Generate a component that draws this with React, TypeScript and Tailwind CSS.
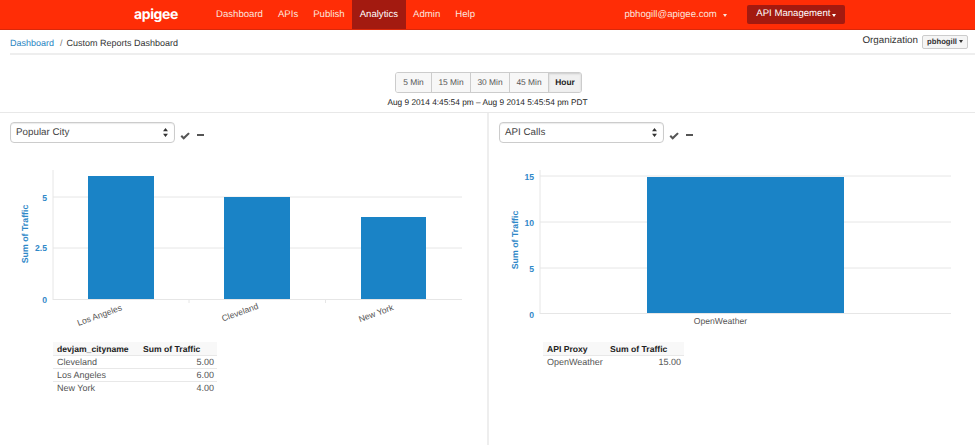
import React from 'react';

const NAV_ITEMS = ['Dashboard', 'APIs', 'Publish', 'Analytics', 'Admin', 'Help'];
const RANGES = ['5 Min', '15 Min', '30 Min', '45 Min', 'Hour'];
const AXIS = '#e6e6e6';
const BLUE = '#1a83c6';
const LABEL = '#2f88c8';

const CaretsIcon = () => (
  <svg width="5" height="9" viewBox="0 0 6 11" className="absolute right-[6px] top-[5px]">
    <path d="M3 0 L6 4 L0 4 Z M0 7 L6 7 L3 11 Z" fill="#333" />
  </svg>
);

const ReportHeader: React.FC<{ label: string }> = ({ label }) => (
  <div className="flex items-center">
    <div className="relative h-[21px] w-[165px] rounded-[4px] border border-[#ccc] bg-white pl-[5px] text-[9.8px] leading-[19px] text-[#444] shadow-[inset_0_1px_1px_rgba(0,0,0,0.08)]">
      {label}
      <CaretsIcon />
    </div>
    <svg width="10" height="8" viewBox="0 0 10 8" className="ml-[5px] mt-[6px]">
      <path d="M0.5 4.5 L2 3 L3.7 4.8 L8.3 0.5 L9.8 1.8 L3.7 7.8 Z" fill="#555" />
    </svg>
    <div className="ml-[7px] mt-[4px] h-[2px] w-[7px] bg-[#555]" />
  </div>
);

const Table: React.FC<{ head: string; rows: [string, string][]; width: string; nameWidth: string }> = ({
  head,
  rows,
  width,
  nameWidth,
}) => (
  <table className={`${width} table-fixed border-collapse text-[9px] leading-[12px] text-[#555]`}>
    <thead>
      <tr className="bg-[#f8f8f8] font-bold text-[#222]">
        <th className={`${nameWidth} h-[13.5px] py-0 pl-[4px] text-left text-[8.6px]`}>{head}</th>
        <th className="h-[13.5px] py-0 pr-[3px] text-left text-[8.6px]">Sum of Traffic</th>
      </tr>
    </thead>
    <tbody>
      {rows.map(([name, value]) => (
        <tr key={name} className="border-t border-[#e8e8e8]">
          <td className="h-[13px] py-0 pl-[4px]">{name}</td>
          <td className="h-[13px] py-0 pr-[3px] text-right">{value}</td>
        </tr>
      ))}
    </tbody>
  </table>
);

const chartFont = { fontFamily: '"Liberation Sans", Arial, sans-serif' };

const CityChart = () => (
  <svg width="486" height="178" viewBox="0 0 486 178" style={chartFont} className="block">
    {[27, 78].map((y) => (
      <line key={y} x1="53" x2="462" y1={y} y2={y} stroke={AXIS} />
    ))}
    <line x1="53" x2="53" y1="0" y2="130" stroke={AXIS} />
    <line x1="53" x2="462" y1="129.5" y2="129.5" stroke={AXIS} />
    <line x1="189" x2="189" y1="129" y2="133" stroke={AXIS} />
    <line x1="325.5" x2="325.5" y1="129" y2="133" stroke={AXIS} />
    <rect x="88" y="6" width="66" height="123" fill={BLUE} />
    <rect x="224" y="27" width="66" height="102" fill={BLUE} />
    <rect x="361" y="47" width="65" height="82" fill={BLUE} />
    <g fontSize="8.6" fontWeight="700" fill={LABEL} textAnchor="end">
      <text x="47" y="31">5</text>
      <text x="47" y="81">2.5</text>
      <text x="47" y="133">0</text>
    </g>
    <text transform="translate(28 64) rotate(-90)" fontSize="8.8" fontWeight="700" fill={LABEL} textAnchor="middle">
      Sum of Traffic
    </text>
    <g fontSize="8.6" fill="#555" textAnchor="middle">
      <text transform="translate(100.5 148) rotate(-20)">Los Angeles</text>
      <text transform="translate(241 145) rotate(-20)">Cleveland</text>
      <text transform="translate(377 146) rotate(-20)">New York</text>
    </g>
  </svg>
);

const ApiChart = () => (
  <svg width="486" height="178" viewBox="0 0 486 178" style={chartFont} className="block">
    {[6, 52, 98].map((y) => (
      <line key={y} x1="51" x2="462" y1={y} y2={y} stroke={AXIS} />
    ))}
    <line x1="51" x2="51" y1="0" y2="144" stroke={AXIS} />
    <line x1="51" x2="462" y1="143.5" y2="143.5" stroke={AXIS} />
    <rect x="158" y="7" width="197" height="136" fill={BLUE} />
    <g fontSize="8.6" fontWeight="700" fill={LABEL} textAnchor="end">
      <text x="45" y="10">15</text>
      <text x="45" y="56">10</text>
      <text x="45" y="102">5</text>
      <text x="45" y="148">0</text>
    </g>
    <text transform="translate(28.5 70) rotate(-90)" fontSize="8.8" fontWeight="700" fill={LABEL} textAnchor="middle">
      Sum of Traffic
    </text>
    <text x="231.5" y="154" fontSize="8.6" fill="#555" textAnchor="middle">
      OpenWeather
    </text>
  </svg>
);

const App: React.FC = () => {
  return (
    <div className="h-[446px] w-[975px] overflow-hidden bg-white font-['Liberation_Sans',Arial,sans-serif] text-[#333] [text-rendering:geometricPrecision]">
      <nav className="flex h-[30px] items-stretch border-b border-[#d9280b] bg-[#ff2d06] text-[9.6px] text-[#fbe3dc]">
        <div className="ml-[133px] mr-[29.5px] w-[46px] self-center text-center font-['Inter',sans-serif] text-[14px] font-bold leading-[28px] tracking-[-0.4px] text-white">
          apigee
        </div>
        {NAV_ITEMS.map((item) => (
          <div
            key={item}
            className={
              item === 'Analytics'
                ? 'flex items-center bg-[#a31a10] px-[7.5px] pt-[1px] text-white'
                : 'flex items-center px-[7.5px] pt-[1px]'
            }
          >
            {item}
          </div>
        ))}
        <div className="ml-[141.9px] flex w-[102px] items-center pt-[1px]">
          pbhogill@apigee.com
          <span className="ml-[6px] mt-[1px] h-0 w-0 border-x-[2.5px] border-t-[3px] border-x-transparent border-t-[#fbe3dc]" />
        </div>
        <div className="ml-[21px] mt-[5px] flex h-[19px] w-[98px] items-center justify-center rounded-[2px] bg-[#a31a10] text-white">
          API Management
          <span className="ml-[2px] mt-[1px] h-0 w-0 border-x-[2.5px] border-t-[3px] border-x-transparent border-t-white" />
        </div>
      </nav>

      <div className="ml-[10px] flex h-[25px] items-center justify-between border-b-2 border-[#eee] pr-[7px] text-[9px]">
        <div className="flex items-center pt-[4px]">
          <span className="text-[#2a85c2]">Dashboard</span>
          <span className="ml-[6px] mr-[4px] text-[#777]">/</span>
          <span>Custom Reports Dashboard</span>
        </div>
        <div className="flex items-center">
          <span className="mr-[4px] text-[9.8px]">Organization</span>
          <div className="flex h-[14px] w-[46px] items-center justify-center rounded-[2px] border border-[#ccc] bg-[#f5f5f5] text-[7.7px] font-bold">
            pbhogill
            <span className="ml-[2px] h-0 w-0 border-x-[2.5px] border-t-[3px] border-x-transparent border-t-[#333]" />
          </div>
        </div>
      </div>

      <div className="flex pl-[395px] pt-[17px]">
        <div className="flex h-[21px] overflow-hidden rounded-[3px] border border-[#ccc] text-[8.4px] text-[#555]">
          {RANGES.map((range, i) => (
            <div
              key={range}
              className={`flex items-center justify-center ${i > 0 ? 'border-l border-[#ccc]' : ''} ${
                range === 'Hour'
                  ? 'w-[33px] bg-[#f0f0f0] font-bold text-[#222] shadow-[inset_0_1px_2px_rgba(0,0,0,0.15)]'
                  : i === 0
                    ? 'w-[35px] bg-[#f7f7f7]'
                    : 'w-[39px] bg-[#f7f7f7]'
              }`}
            >
              {range}
            </div>
          ))}
        </div>
      </div>
      <div className="mt-[1px] h-[18px] text-center text-[8.3px] leading-[16px] text-[#222]">
        Aug 9 2014 4:45:54 pm – Aug 9 2014 5:45:54 pm PDT
      </div>

      <div className="flex h-[333px] border-t border-[#e8e8e8]">
        <section className="w-[489px] border-r-2 border-[#eee] pt-[9px]">
          <div className="pl-[10px]">
            <ReportHeader label="Popular City" />
          </div>
          <div className="mt-[27px]">
            <CityChart />
          </div>
          <div className="ml-[53px] mt-[-6px]">
            <Table
              head="devjam_cityname"
              width="w-[164px]"
              nameWidth="w-[90px]"
              rows={[
                ['Cleveland', '5.00'],
                ['Los Angeles', '6.00'],
                ['New York', '4.00'],
              ]}
            />
          </div>
        </section>
        <section className="flex-1 pt-[9px]">
          <div className="pl-[10px]">
            <ReportHeader label="API Calls" />
          </div>
          <div className="mt-[27px]">
            <ApiChart />
          </div>
          <div className="ml-[54px] mt-[-6px]">
            <Table head="API Proxy" width="w-[141px]" nameWidth="w-[67px]" rows={[['OpenWeather', '15.00']]} />
          </div>
        </section>
      </div>
    </div>
  );
};

export default App;
